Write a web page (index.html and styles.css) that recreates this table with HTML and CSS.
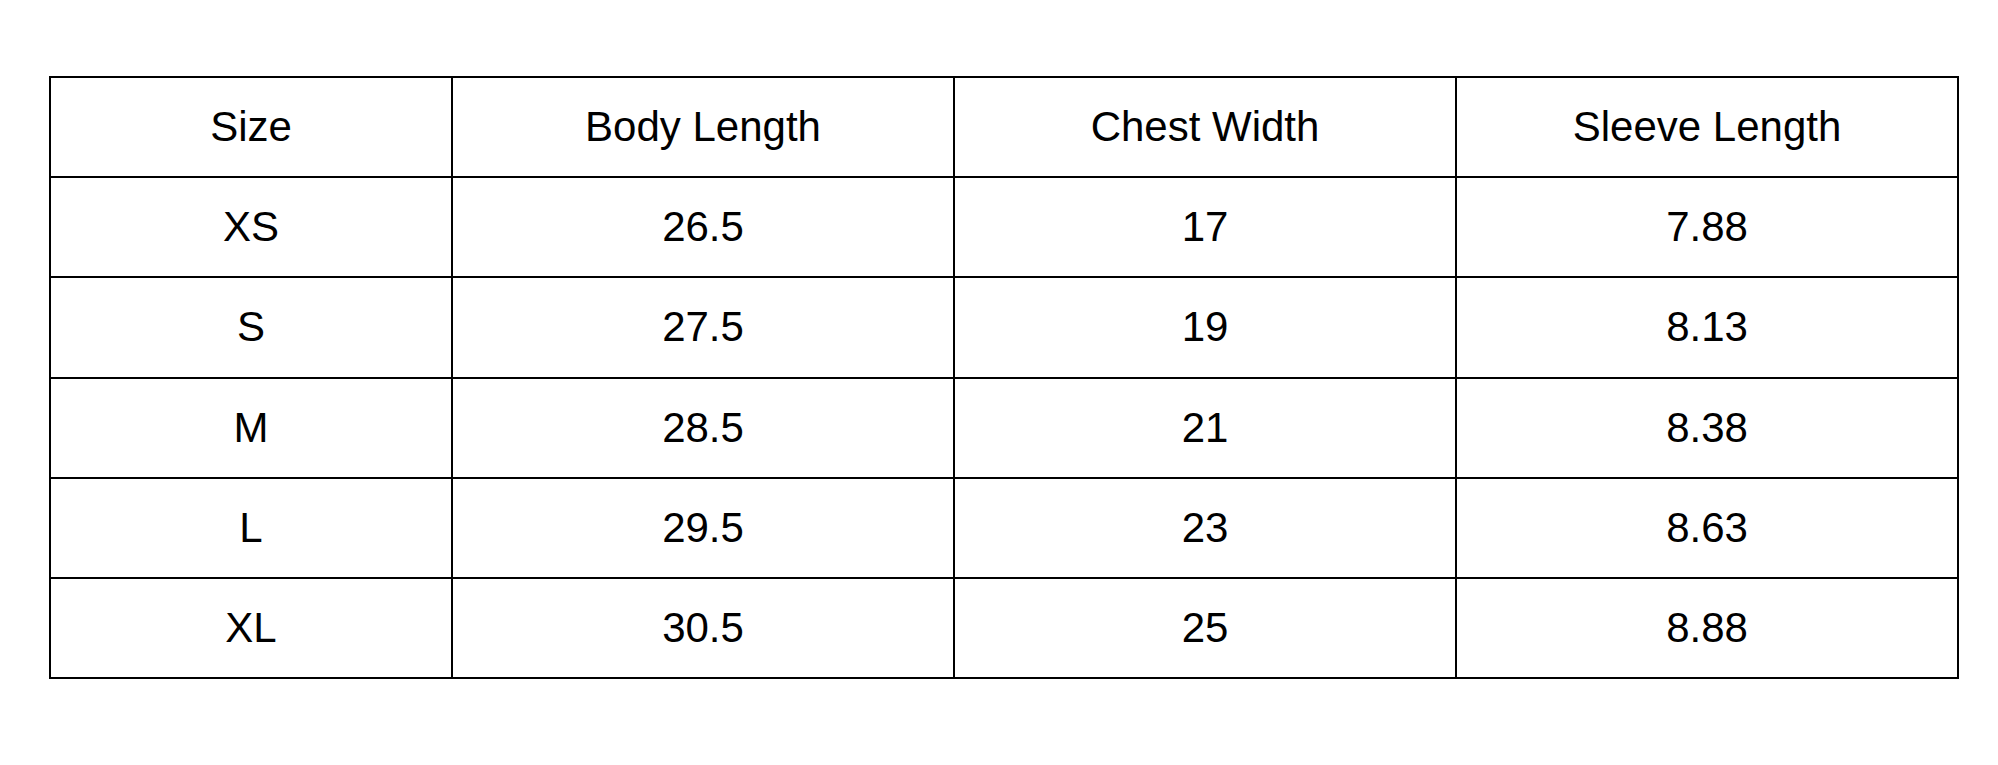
FILE: index.html
```html
<!DOCTYPE html>
<html>
<head>
<meta charset="utf-8">
<link rel="stylesheet" href="styles.css">
</head>
<body>
<div class="page">
<table class="sizes">
<colgroup>
<col class="c1"><col class="c2"><col class="c3"><col class="c4">
</colgroup>
<thead>
<tr><th>Size</th><th>Body Length</th><th>Chest Width</th><th>Sleeve Length</th></tr>
</thead>
<tbody>
<tr><td>XS</td><td>26.5</td><td>17</td><td>7.88</td></tr>
<tr><td>S</td><td>27.5</td><td>19</td><td>8.13</td></tr>
<tr><td>M</td><td>28.5</td><td>21</td><td>8.38</td></tr>
<tr><td>L</td><td>29.5</td><td>23</td><td>8.63</td></tr>
<tr><td>XL</td><td>30.5</td><td>25</td><td>8.88</td></tr>
</tbody>
</table>
</div>
</body>
</html>
```
FILE: styles.css
```css
html, body {
  margin: 0;
  background: #fff;
}
.page {
  padding: 76px 0 0 49px;
}
.sizes {
  border-collapse: collapse;
  table-layout: fixed;
  width: 1910px;
  font-family: "Liberation Sans", Arial, sans-serif;
  font-size: 42px;
  color: #000;
}
.c1 { width: 402px; }
.c2, .c3, .c4 { width: 502px; }
.sizes th, .sizes td {
  border: 2px solid #000;
  height: 98.2px;
  padding: 0;
  text-align: center;
  vertical-align: middle;
  font-weight: normal;
}
```
